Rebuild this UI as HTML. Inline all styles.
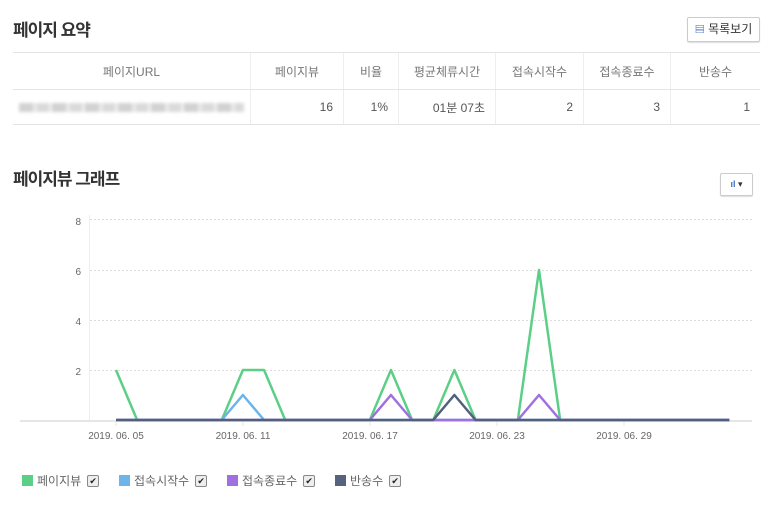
<!DOCTYPE html>
<html><head><meta charset="utf-8"><style>
body{margin:0;width:773px;height:509px;background:#fff;font-family:"Liberation Sans","Noto Sans CJK KR",sans-serif;position:relative;overflow:hidden;color:#333}
.h{position:absolute;left:13px;font-size:17px;font-weight:bold;color:#333;letter-spacing:-1px}
.btn{position:absolute;left:687px;top:17px;width:71px;height:23px;border:1px solid #ccc;border-radius:2px;box-shadow:0 1px 1px #ddd;font-size:12px;line-height:23px;text-align:center;color:#333}
table{position:absolute;left:13px;top:52px;width:747px;border-collapse:collapse;font-size:12px;color:#777}
td{border-top:1px solid #e4e4e4;border-bottom:1px solid #e4e4e4;border-left:1px solid #eee;padding:0 10px}
td:first-child{border-left:none}
tr.hd td{height:36px;text-align:center}
tr.r td{height:34px;text-align:right;color:#555}
.blur{height:9px;margin:0 -4px;background:repeating-linear-gradient(90deg,#d2d2d2 0 14px,#eaeaea 14px 18px,#dadada 18px 30px,#f0f0f0 30px 33px);filter:blur(1.5px)}
.leg{position:absolute;top:472px;font-size:12px;color:#666;display:flex;align-items:center}
.sq{width:11px;height:11px;margin-right:4px}
.cb{width:10px;height:10px;border:1px solid #888;border-radius:2px;background:#eee;margin-left:6px;font-size:9px;line-height:10px;text-align:center;color:#222}
</style></head><body>
<div class="h" style="top:16px">페이지 요약</div>
<div class="btn"><span style="color:#2f62b8;font-size:10px;font-weight:bold">▤</span> 목록보기</div>
<table>
<tr class="hd"><td style="width:217px">페이지URL</td><td style="width:72px">페이지뷰</td><td style="width:34px">비율</td><td style="width:76px">평균체류시간</td><td style="width:67px">접속시작수</td><td style="width:66px">접속종료수</td><td>반송수</td></tr>
<tr class="r"><td><div class="blur"></div></td><td>16</td><td>1%</td><td>01분 07초</td><td>2</td><td>3</td><td>1</td></tr>
</table>
<div class="h" style="top:165px">페이지뷰 그래프</div>
<div class="btn" style="left:720px;top:173px;width:31px;height:21px;line-height:21px;font-size:9px"><span style="color:#3a6fc4;font-weight:bold">ıl</span> ▾</div>
<svg width="773" height="509" style="position:absolute;left:0;top:0">
<g stroke="#ddd" stroke-dasharray="2,2" stroke-width="1">
<line x1="90" y1="219.5" x2="752" y2="219.5"/><line x1="90" y1="270.5" x2="752" y2="270.5"/><line x1="90" y1="320.5" x2="752" y2="320.5"/><line x1="90" y1="370.5" x2="752" y2="370.5"/></g>
<line x1="89.5" y1="215" x2="89.5" y2="420" stroke="#eee"/>
<line x1="20" y1="421" x2="752" y2="421" stroke="#ddd" stroke-width="1.5"/>
<g stroke="#e4e4e4"><line x1="116" y1="421" x2="116" y2="426"/><line x1="243" y1="421" x2="243" y2="426"/><line x1="370" y1="421" x2="370" y2="426"/><line x1="497" y1="421" x2="497" y2="426"/><line x1="624" y1="421" x2="624" y2="426"/></g>
<g font-size="10" fill="#666" font-family="Liberation Sans,sans-serif" text-anchor="end"><text x="81" y="225">8</text><text x="81" y="275">6</text><text x="81" y="325">4</text><text x="81" y="375">2</text></g>
<g font-size="10" fill="#666" font-family="Liberation Sans,sans-serif" text-anchor="middle"><text x="116" y="439">2019. 06. 05</text><text x="243" y="439">2019. 06. 11</text><text x="370" y="439">2019. 06. 17</text><text x="497" y="439">2019. 06. 23</text><text x="624" y="439">2019. 06. 29</text></g>
<g fill="none" stroke-width="2.5" stroke-linejoin="round">
<polyline stroke="#5ccf86" points="116,370 137.15,420 221.75,420 242.9,370 264.05,370 285.2,420 369.8,420 390.95,370 412.1,420 433.25,420 454.4,370 475.55,420 517.85,420 539,270 560.15,420 729.35,420"/>
<polyline stroke="#6cb4ea" points="116,420 221.75,420 242.9,395 264.05,420 729.35,420"/>
<polyline stroke="#a070e0" points="116,420 369.8,420 390.95,395 412.1,420 517.85,420 539,395 560.15,420 729.35,420"/>
<polyline stroke="#52607c" points="116,420 433.25,420 454.4,395 475.55,420 729.35,420"/>
</g></svg>
<div class="leg" style="left:22px"><div class="sq" style="background:#5ccf86"></div>페이지뷰<div class="cb">✔</div></div>
<div class="leg" style="left:119px"><div class="sq" style="background:#6cb4ea"></div>접속시작수<div class="cb">✔</div></div>
<div class="leg" style="left:227px"><div class="sq" style="background:#a070e0"></div>접속종료수<div class="cb">✔</div></div>
<div class="leg" style="left:335px"><div class="sq" style="background:#55637e"></div>반송수<div class="cb">✔</div></div>
</body></html>
